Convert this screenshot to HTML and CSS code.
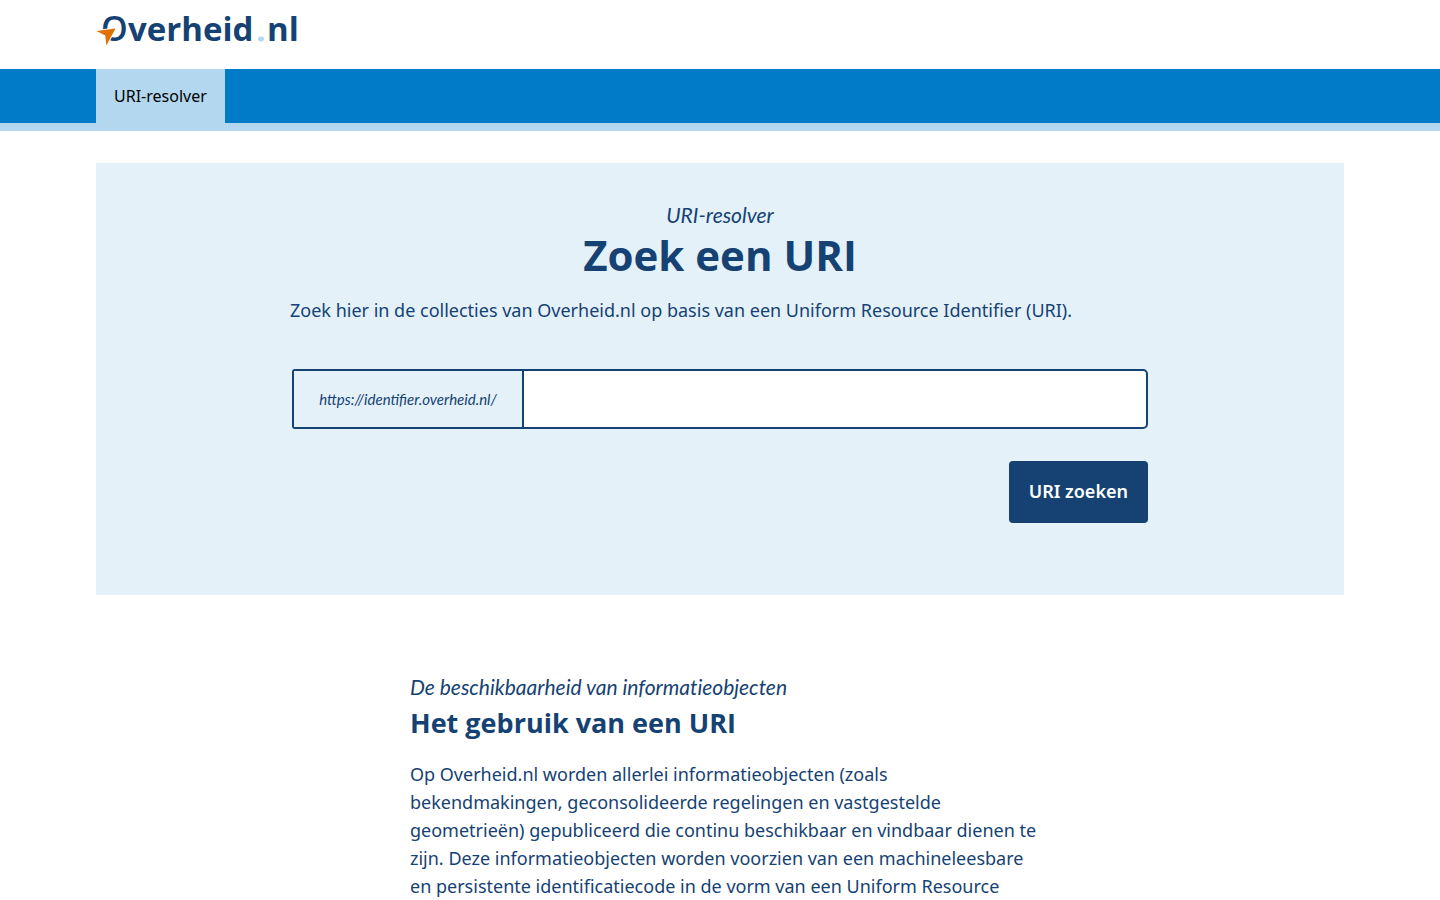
FILE: index.html
```html
<!DOCTYPE html>
<html lang="nl">
<head>
<meta charset="utf-8">
<meta name="viewport" content="width=device-width, initial-scale=1">
<title>URI-resolver | Overheid.nl</title>
<link rel="stylesheet" href="styles.css">
</head>
<body>
<header class="header">
  <div class="container">
    <a class="logo" href="#" aria-label="Overheid.nl">
      <svg class="logo-image" viewBox="0 0 202 34" aria-hidden="true">
        <text class="logo-text logo-initial" x="5" y="27">O</text>
        <text class="logo-text" x="32" y="27">verheid</text>
        <ellipse class="logo-dot" cx="165" cy="25" rx="3" ry="2.4"/>
        <text class="logo-text" x="171" y="27">nl</text>
        <path class="logo-arrow" d="M0.5 17 L19.5 14.5 L10.3 31.4 L9.3 21.5 Z"/>
      </svg>
    </a>
  </div>
</header>
<nav class="nav" aria-label="Hoofdnavigatie">
  <div class="container">
    <a class="nav-link" href="#">URI-resolver</a>
  </div>
</nav>
<main class="container">
  <section class="hero">
    <p class="subtitle">URI-resolver</p>
    <h1 class="title">Zoek een URI</h1>
    <div class="search">
      <p class="intro">Zoek hier in de collecties van Overheid.nl op basis van een Uniform Resource Identifier (URI).</p>
      <form class="form">
        <div class="field">
          <label class="prefix" for="uri">https://identifier.overheid.nl/</label>
          <input class="input" id="uri" name="uri" type="text">
        </div>
        <button class="button" type="submit">URI zoeken</button>
      </form>
    </div>
  </section>
  <article class="article">
    <p class="subtitle">De beschikbaarheid van informatieobjecten</p>
    <h2 class="heading">Het gebruik van een URI</h2>
    <p class="text">Op Overheid.nl worden allerlei informatieobjecten (zoals bekendmakingen, geconsolideerde regelingen en vastgestelde geometrieën) gepubliceerd die continu beschikbaar en vindbaar dienen te zijn. Deze informatieobjecten worden voorzien van een machineleesbare en persistente identificatiecode in de vorm van een Uniform Resource</p>
  </article>
</main>
</body>
</html>
```
FILE: styles.css
```css
* {
  box-sizing: border-box;
}

body {
  margin: 0;
  background: #fff;
  color: #154273;
  font-family: "Noto Sans", "Open Sans", sans-serif;
  font-size: 18px;
  line-height: 28px;
}

p,
h1,
h2 {
  margin: 0;
}

.container {
  max-width: 1312px;
  margin: 0 auto;
  padding: 0 32px;
}

.header {
  padding: 14px 0 21px;
}

.logo {
  display: block;
  width: 202px;
}

.logo-image {
  display: block;
  width: 100%;
  overflow: visible;
}

.logo-text {
  fill: #154273;
  font-family: "Open Sans", sans-serif;
  font-size: 33px;
  font-weight: 700;
}

.logo-initial {
  font-size: 34px;
  font-weight: 600;
}

.logo-dot {
  fill: #b2d7ee;
}

.logo-arrow {
  fill: #e17000;
  stroke: #fff;
  stroke-width: 2px;
  paint-order: stroke;
}

.nav {
  background: #007bc7;
  border-bottom: 8px solid #b2d7ee;
}

.nav .container {
  display: flex;
}

.nav-link {
  padding: 13px 18px;
  background: #b2d7ee;
  color: #000;
  font-size: 16px;
  text-decoration: none;
}

.hero {
  margin-top: 32px;
  padding: 38px 32px 72px;
  background: #e4f1f9;
  text-align: center;
}

.subtitle {
  font-family: Lato, "Open Sans", sans-serif;
  font-size: 21px;
  font-style: italic;
  font-variant-ligatures: none;
}

.title {
  font-family: "Open Sans", sans-serif;
  font-size: 42px;
  font-weight: 700;
  line-height: 52px;
}

.search {
  max-width: 860px;
  margin: 0 auto;
  text-align: left;
}

.intro {
  margin-top: 15px;
}

.form {
  display: flex;
  flex-direction: column;
  align-items: flex-end;
  gap: 32px;
  margin-top: 45px;
  padding: 0 2px;
}

.field {
  display: flex;
  align-self: stretch;
  border: 2px solid #154273;
  border-radius: 3px 5px 5px 3px;
  background: #fff;
}

.prefix {
  flex: none;
  width: 230px;
  padding: 14px 0;
  border-right: 2px solid #154273;
  background: #e4f1f9;
  font-family: Lato, "Open Sans", sans-serif;
  font-size: 15px;
  font-style: italic;
  text-align: center;
}

.input {
  flex: 1;
  min-width: 0;
  padding: 0 16px;
  border: 0;
  border-radius: 3px;
  background: transparent;
  color: inherit;
  font: inherit;
}

.button {
  padding: 16px 20px 18px;
  border: 0;
  border-radius: 4px;
  background: #154273;
  color: #fff;
  font: inherit;
  font-weight: 600;
}

.article {
  max-width: 640px;
  margin: 0 auto;
  padding: 78px 0 0 10px;
}

.heading {
  margin-bottom: 15px;
  font-family: "Open Sans", sans-serif;
  font-size: 27px;
  font-weight: 700;
  line-height: 44px;
}
```
